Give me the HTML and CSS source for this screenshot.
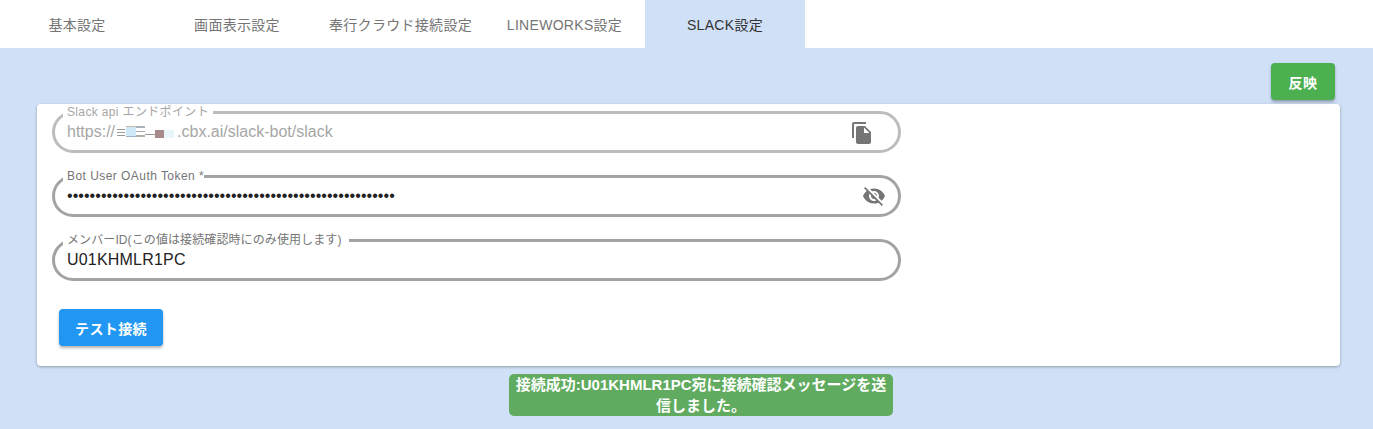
FILE: index.html
```html
<!DOCTYPE html>
<html lang="ja">
<head>
<meta charset="utf-8">
<title>SLACK設定</title>
<link rel="stylesheet" href="styles.css">
</head>
<body>
<nav class="tabs">
  <a class="tab">基本設定</a>
  <a class="tab">画面表示設定</a>
  <a class="tab">奉行クラウド接続設定</a>
  <a class="tab tab-lineworks">LINEWORKS設定</a>
  <a class="tab tab-active">SLACK設定</a>
</nav>
<main class="page">
  <div class="toolbar"><button class="btn btn-green">反映</button></div>
  <section class="card">
    <fieldset class="field field-disabled">
      <legend class="legend">Slack api エンドポイント</legend>
      <div class="value value-disabled">https://<svg class="redact" width="62" height="13" viewBox="0 0 62 13"><rect x="2" y="3" width="8" height="1" fill="#9a9a9a"/><rect x="2" y="6" width="8" height="1" fill="#9a9a9a"/><rect x="2" y="9" width="8" height="1" fill="#9a9a9a"/><rect x="11" y="0" width="10" height="11" fill="#cfe9f8"/><rect x="11" y="0" width="10" height="1" fill="#c9b9a9"/><rect x="11" y="10" width="10" height="1" fill="#9db4c8"/><rect x="21" y="0" width="9" height="2" fill="#a9b4bc"/><rect x="21" y="5" width="9" height="1" fill="#a9a9a9"/><rect x="21" y="9" width="9" height="2" fill="#b5b0a8"/><rect x="30" y="8" width="10" height="1" fill="#9a9a9a"/><rect x="40" y="4" width="9" height="8" fill="#a88a8a"/><rect x="49" y="4" width="10" height="8" fill="#e8f6fb"/></svg>.cbx.ai/slack-bot/slack</div>
      <svg class="icon" viewBox="0 0 24 24" width="24" height="24"><path d="M16 1H4c-1.1 0-2 .9-2 2v14h2V3h12V1zm-1 4l6 6v10c0 1.1-.9 2-2 2H7.99C6.89 23 6 22.1 6 21l.01-14c0-1.1.89-2 1.99-2h7zm-1 7h5.5L14 6.5V12z"/></svg>
    </fieldset>
    <fieldset class="field">
      <legend class="legend legend-tight">Bot User OAuth Token *</legend>
      <div class="value value-dots">••••••••••••••••••••••••••••••••••••••••••••••••••••••••••</div>
      <svg class="icon icon-eye" viewBox="0 0 24 24" width="24" height="24"><path d="M12 7c2.76 0 5 2.24 5 5 0 .65-.13 1.26-.36 1.83l2.92 2.92c1.51-1.26 2.7-2.89 3.43-4.75-1.73-4.39-6-7.5-11-7.5-1.4 0-2.74.25-3.98.7l2.16 2.16C10.74 7.13 11.35 7 12 7zM2 4.27l2.28 2.28.46.46C3.08 8.3 1.78 10.02 1 12c1.73 4.39 6 7.5 11 7.5 1.55 0 3.03-.3 4.38-.84l.42.42L19.73 22 21 20.73 3.27 3 2 4.27zM7.53 9.8l1.55 1.55c-.05.21-.08.43-.08.65 0 1.66 1.34 3 3 3 .22 0 .44-.03.65-.08l1.55 1.55c-.67.33-1.41.53-2.2.53-2.76 0-5-2.24-5-5 0-.79.2-1.53.53-2.2zm4.31-.78l3.15 3.15.02-.16c0-1.66-1.34-3-3-3l-.17.01z"/></svg>
    </fieldset>
    <fieldset class="field">
      <legend class="legend legend-wide">メンバーID(この値は接続確認時にのみ使用します)</legend>
      <div class="value value-id">U01KHMLR1PC</div>
    </fieldset>
    <button class="btn btn-blue">テスト接続</button>
  </section>
  <div class="snack">接続成功:U01KHMLR1PC宛に接続確認メッセージを送信しました。</div>
</main>
</body>
</html>
```
FILE: styles.css
```css
* { box-sizing: border-box; }
html, body { margin: 0; height: 100%; }
body {
  background: #d0e0f7;
  font-family: "Liberation Sans", "Noto Sans CJK JP", sans-serif;
  overflow: hidden;
}
.tabs {
  display: grid;
  grid-template-columns: 154px 166px 161px 164px 160px 1fr;
  height: 48px;
  background: #fff;
}
.tab {
  display: flex;
  align-items: center;
  justify-content: center;
  font-size: 14px;
  letter-spacing: .3px;
  color: #757575;
}
.tab-lineworks { padding-left: 3px; }
.tab-active {
  background: #d0e0f7;
  color: #333;
}
.toolbar {
  display: flex;
  justify-content: flex-end;
  padding: 15px 38px 4px 0;
}
.btn {
  border: 0;
  border-radius: 4px;
  color: #fff;
  font-family: inherit;
  font-size: 14px;
  font-weight: 700;
  height: 37px;
  letter-spacing: .4px;
  box-shadow: 0 2px 3px rgba(0, 0, 0, .3);
}
.btn-green { background: #4caf50; width: 64px; }
.btn-blue { background: #2196f3; width: 104px; margin: 28px 0 0 7px; display: block; }
.card {
  background: #fff;
  border-radius: 4px;
  box-shadow: 0 1px 3px rgba(0, 0, 0, .3);
  margin: 0 33px 0 37px;
  padding: 1px 15px 20px;
  height: 262px;
}
.field {
  position: relative;
  width: 849px;
  height: 48px;
  margin: 0 0 16px;
  padding: 0 12px;
  border: 3px solid #a3a3a3;
  border-radius: 21px;
  min-inline-size: 0;
}
.field-disabled { border-color: #bdbdbd; }
.legend {
  margin-left: -4px;
  padding: 0 4px;
  font-size: 12px;
  line-height: 14px;
  color: #757575;
  letter-spacing: .1px;
}
.field-disabled .legend { color: #a6a6a6; letter-spacing: .35px; }
.legend-tight { padding-right: 0; letter-spacing: .45px; }
.legend-wide { padding-right: 7px; }
.value {
  padding-top: 3px;
  font-size: 16px;
  line-height: 20px;
  color: #222;
}
.value-disabled { color: #a6a6a6; }
.value-dots { letter-spacing: .05px; }
.value-id { letter-spacing: .2px; }
.redact { vertical-align: -2px; }
.icon {
  position: absolute;
  right: 24px;
  top: 2px;
  fill: #757575;
}
.icon-eye { right: 12px; top: 1px; }
.snack {
  width: 384px;
  min-height: 42px;
  margin: 8px 0 0 509px;
  padding: 0 4px;
  background: #60ab5f;
  border-radius: 5px;
  color: #fff;
  font-size: 15px;
  font-weight: 700;
  line-height: 21px;
  text-align: center;
}
```
